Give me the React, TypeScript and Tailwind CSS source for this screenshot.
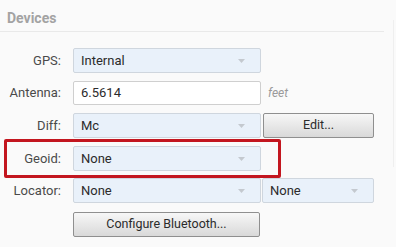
import React from "react";

const font = { fontFamily: "Roboto, 'Noto Sans', sans-serif" };

function Arrow() {
  return (
    <svg width="7" height="4" viewBox="0 0 7 4" className="shrink-0">
      <path d="M0 0 L7 0 L3.5 4 Z" fill="#c4c9cf" />
    </svg>
  );
}

function Select({ value, w }: { value: string; w: string }) {
  return (
    <div
      className={`${w} h-[25px] flex items-center justify-between pl-[7px] pr-[15px] rounded-[2px] border border-[#cfd6de] bg-[#e9f1fa] text-[13px] text-[#2b2b2b]`}
    >
      <span>{value}</span>
      <Arrow />
    </div>
  );
}

function Label({ text }: { text: string }) {
  return (
    <div className="w-[61px] text-right text-[13px] text-[#4a4a4a] shrink-0">{text}</div>
  );
}

function Btn({ text, w }: { text: string; w: string }) {
  return (
    <div
      className={`${w} h-[25px] flex items-center justify-center rounded-[2px] border border-[#8f8f8f] bg-gradient-to-b from-[#f7f7f7] to-[#d9d9d9] text-[12.5px] text-[#2b2b2b]`}
    >
      {text}
    </div>
  );
}

export default function App() {
  return (
    <div className="relative w-[396px] h-[247px] bg-[#fafafa] overflow-hidden" style={font}>
      <div className="absolute left-[393px] top-[20px] w-px h-[147px] bg-[#efefef]" />
      <div className="pl-[7px] pt-[8px] h-[31px] text-[14px] font-bold text-[#a3a3a3]">Devices</div>
      <div className="w-[384px] h-px bg-[#e9e9e9]" />
      <div className="flex flex-col pt-[16px]">
        <div className="flex items-center gap-[12px] h-[25px]">
          <Label text="GPS:" />
          <Select value="Internal" w="w-[188px]" />
        </div>
        <div className="flex items-center gap-[12px] h-[24px] mt-[8px]">
          <Label text="Antenna:" />
          <div className="w-[188px] h-[24px] flex items-center pl-[7px] border border-[#cfcfcf] rounded-[2px] bg-white text-[13px] text-[#2b2b2b]">
            6.5614
          </div>
          <span className="ml-[-5px] text-[12px] italic text-[#9a9a9a]">feet</span>
        </div>
        <div className="flex items-center gap-[12px] h-[25px] mt-[8px]">
          <Label text="Diff:" />
          <div className="flex items-center gap-[2px]">
            <Select value="Mc" w="w-[188px]" />
            <Btn text="Edit..." w="w-[111px]" />
          </div>
        </div>
        <div className="mt-[1px] ml-[4px] w-[277px] h-[39px] border-[3px] border-[#c3161f] rounded-[2px] flex items-center">
          <div className="flex items-center gap-[12px] ml-[-7px]">
            <Label text="Geoid:" />
            <Select value="None" w="w-[188px]" />
          </div>
        </div>
        <div className="flex items-center gap-[12px] h-[25px]">
          <Label text="Locator:" />
          <div className="flex items-center gap-[1px]">
            <Select value="None" w="w-[188px]" />
            <Select value="None" w="w-[112px]" />
          </div>
        </div>
        <div className="flex items-center gap-[12px] h-[25px] mt-[9px]">
          <div className="w-[61px]" />
          <Btn text="Configure Bluetooth..." w="w-[187px]" />
        </div>
      </div>
    </div>
  );
}
